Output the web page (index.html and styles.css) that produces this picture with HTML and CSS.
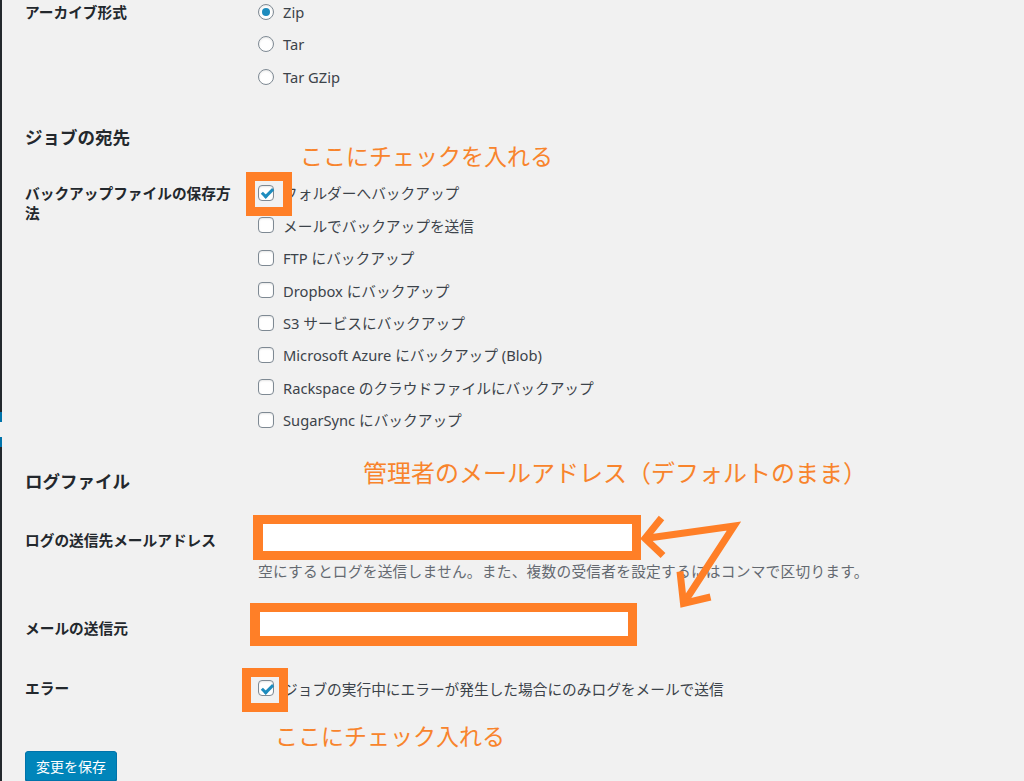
FILE: index.html
```html
<!DOCTYPE html>
<html lang="ja">
<head>
    <meta charset="UTF-8">
    <meta name="viewport" content="width=device-width, initial-scale=1.0">
    <title>ジョブの編集</title>
    <link rel="stylesheet" href="styles.css">
</head>
<body>

    <div class="edge"></div>

    <div class="main">
        <!-- アーカイブ形式 -->
        <div class="row row-archive">
            <div class="row-label">アーカイブ形式</div>
            <div class="options">
                <label class="opt"><input type="radio" name="archiveformat" value="zip" checked> Zip</label>
                <label class="opt"><input type="radio" name="archiveformat" value="tar"> Tar</label>
                <label class="opt"><input type="radio" name="archiveformat" value="tgz"> Tar GZip</label>
            </div>
        </div>

        <h2 class="heading heading-dest">ジョブの宛先</h2>

        <!-- 保存方法 -->
        <div class="row">
            <div class="row-label">バックアップファイルの保存方法</div>
            <div class="options">
                <label class="opt"><input type="checkbox" name="dest" value="folder" checked> フォルダーへバックアップ</label>
                <label class="opt"><input type="checkbox" name="dest" value="email"> メールでバックアップを送信</label>
                <label class="opt"><input type="checkbox" name="dest" value="ftp"> FTP にバックアップ</label>
                <label class="opt"><input type="checkbox" name="dest" value="dropbox"> Dropbox にバックアップ</label>
                <label class="opt"><input type="checkbox" name="dest" value="s3"> S3 サービスにバックアップ</label>
                <label class="opt"><input type="checkbox" name="dest" value="msazure"> Microsoft Azure にバックアップ (Blob)</label>
                <label class="opt"><input type="checkbox" name="dest" value="rsc"> Rackspace のクラウドファイルにバックアップ</label>
                <label class="opt"><input type="checkbox" name="dest" value="sugarsync"> SugarSync にバックアップ</label>
            </div>
        </div>

        <h2 class="heading heading-log">ログファイル</h2>

        <div class="row row-mailto">
            <div class="row-label field-label">ログの送信先メールアドレス</div>
            <div>
                <input type="text" class="text-input" name="mailaddresslog">
                <p class="description">空にするとログを送信しません。また、複数の受信者を設定するにはコンマで区切ります。</p>
            </div>
        </div>

        <div class="row row-mailfrom">
            <div class="row-label field-label">メールの送信元</div>
            <div>
                <input type="text" class="text-input" name="mailaddresssenderlog">
            </div>
        </div>

        <div class="row row-error">
            <div class="row-label">エラー</div>
            <div class="options">
                <label class="opt"><input type="checkbox" name="mailerroronly" checked> ジョブの実行中にエラーが発生した場合にのみログをメールで送信</label>
            </div>
        </div>

        <p class="submit"><button class="button">変更を保存</button></p>
    </div>

    <!-- 注釈 -->
    <div class="note note-1">ここにチェックを入れる</div>
    <div class="note note-2">管理者のメールアドレス（デフォルトのまま）</div>
    <div class="note note-3">ここにチェック入れる</div>

    <div class="mark mark-folder"></div>
    <div class="mark mark-mailto"></div>
    <div class="mark mark-mailfrom"></div>
    <div class="mark mark-error"></div>

    <svg class="arrows" width="120" height="110" viewBox="0 0 120 110">
        <path d="M31.5 13 L15 33.5 L33 50.5" />
        <path d="M15 33.5 L104 21 L53.5 98.5" />
        <path d="M50 66.5 L53.5 98.5 L80.5 92" />
    </svg>

</body>
</html>
```

FILE: styles.css
```css
body {
    margin: 0;
    min-height: 781px;
    display: flex;
    position: relative;
    background-color: #f1f1f1;
    font-family: "Noto Sans", "Noto Sans CJK JP", sans-serif;
    font-size: 14.7px;
    color: #3c434a;
    overflow: hidden;
}
.edge {
    width: 2px;
    flex: none;
    background: linear-gradient(to bottom, #23282d 0 412px, #0073aa 412px 422px, #f1f1f1 422px 437px, #0073aa 437px 447px, #23282d 447px);
}
.main {
    flex: 1;
    padding-left: 23px;
}
.row {
    display: grid;
    grid-template-columns: 233px 1fr;
}
.row-label {
    max-width: 215px;
    padding-top: 6.2px;
    line-height: 20px;
    font-weight: bold;
    color: #23282d;
    font-family: "Noto Sans CJK JP", sans-serif;
}
.row-archive {
    margin-top: -4.2px;
}
.opt {
    height: 32.4px;
    display: flex;
    align-items: center;
    gap: 9px;
    white-space: nowrap;
}

/* ラジオとチェックボックス */
input[type=radio],
input[type=checkbox] {
    appearance: none;
    -webkit-appearance: none;
    position: relative;
    width: 16px;
    height: 16px;
    margin: 0;
    flex: none;
    border: 1px solid #7e8993;
    background-color: #fff;
    box-shadow: inset 0 1px 2px rgba(0, 0, 0, .1);
}
input[type=radio] {
    border-radius: 50%;
}
input[type=checkbox] {
    border-radius: 4px;
}
input[type=radio]:checked::before {
    content: "";
    position: absolute;
    left: 3px;
    top: 3px;
    width: 8px;
    height: 8px;
    border-radius: 50%;
    background-color: #1e8cbe;
}
input[type=checkbox]:checked::before {
    content: "";
    position: absolute;
    left: 4.5px;
    top: 0.5px;
    width: 4px;
    height: 9px;
    border: solid #1e8cbe;
    border-width: 0 3px 3px 0;
    transform: rotate(45deg);
}

.heading {
    margin: 32px 0 27.8px;
    font-size: 17.5px;
    line-height: 24px;
    color: #23282d;
    font-family: "Noto Sans CJK JP", sans-serif;
}
.heading-log {
    margin: 33px 0 29px;
}
.field-label {
    padding-top: 8px;
}
.text-input {
    display: block;
    width: 376px;
    height: 30px;
    box-sizing: border-box;
    margin: 0;
    border: 1px solid #ddd;
    background-color: #fff;
}
.description {
    margin: 9px 0 0;
    line-height: 20px;
    color: #646970;
    letter-spacing: 0.25px;
    white-space: nowrap;
}
.row-mailfrom {
    margin-top: 28px;
}
.row-mailfrom .field-label {
    padding-top: 9px;
}
.row-error {
    margin-top: 33.3px;
}
.submit {
    margin: 46.3px 0 0;
}
.button {
    height: 30px;
    padding: 0 10px;
    border: 1px solid #0073aa;
    border-radius: 3px;
    background-color: #0085ba;
    box-shadow: 0 1px 0 #006799;
    color: #fff;
    font-family: "Noto Sans CJK JP", sans-serif;
    font-size: 14px;
    cursor: pointer;
}

/* 注釈（オレンジ） */
.note {
    position: absolute;
    color: #f8842c;
    font-family: "Noto Sans CJK JP", sans-serif;
    font-size: 23px;
    line-height: 1;
    white-space: nowrap;
}
.note-1 {
    left: 300px;
    top: 143.5px;
}
.note-2 {
    left: 363px;
    top: 460px;
    font-size: 24px;
}
.note-3 {
    left: 275px;
    top: 723.5px;
}
.mark {
    position: absolute;
    box-sizing: border-box;
    border: 9px solid #ff7f27;
}
.mark-folder {
    left: 246px;
    top: 172px;
    width: 46px;
    height: 44px;
}
.mark-mailto {
    left: 253px;
    top: 515px;
    width: 388px;
    height: 45px;
    border-left-width: 10px;
}
.mark-mailfrom {
    left: 250px;
    top: 603px;
    width: 387px;
    height: 43px;
    border-left-width: 10px;
    border-bottom-width: 10px;
}
.mark-error {
    left: 242px;
    top: 668px;
    width: 46px;
    height: 44px;
}
.arrows {
    position: absolute;
    left: 630px;
    top: 505px;
    fill: none;
    stroke: #ff7f27;
    stroke-width: 7;
    stroke-linejoin: miter;
}
```
